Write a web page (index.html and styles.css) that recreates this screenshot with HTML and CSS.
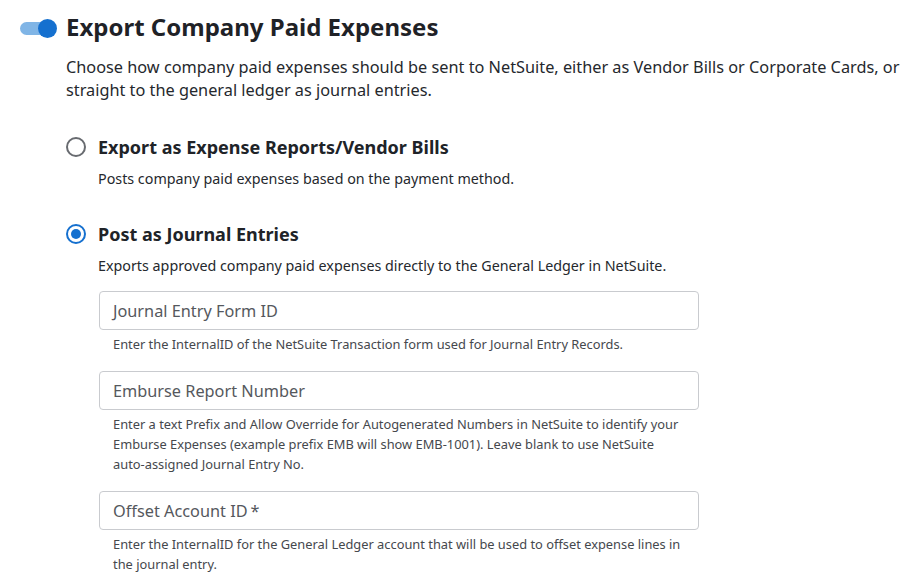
FILE: index.html
```html
<!DOCTYPE html>
<html>
<head>
<meta charset="utf-8">
<link rel="stylesheet" href="styles.css">
</head>
<body>
<div class="page">
  <div class="header">
    <span class="toggle"><span class="knob"></span></span>
    <h1 class="title">Export Company Paid Expenses</h1>
  </div>
  <p class="intro">Choose how company paid expenses should be sent to NetSuite, either as Vendor Bills or Corporate Cards, or straight to the general ledger as journal entries.</p>

  <div class="option">
    <div class="option-head">
      <span class="radio"></span>
      <span class="option-label">Export as Expense Reports/Vendor Bills</span>
    </div>
    <p class="option-desc">Posts company paid expenses based on the payment method.</p>
  </div>

  <div class="option">
    <div class="option-head">
      <span class="radio checked"></span>
      <span class="option-label">Post as Journal Entries</span>
    </div>
    <p class="option-desc">Exports approved company paid expenses directly to the General Ledger in NetSuite.</p>

    <div class="fields">
      <div class="field">
        <div class="input"><span class="placeholder">Journal Entry Form ID</span></div>
        <p class="help">Enter the InternalID of the NetSuite Transaction form used for Journal Entry Records.</p>
      </div>
      <div class="field">
        <div class="input"><span class="placeholder">Emburse Report Number</span></div>
        <p class="help">Enter a text Prefix and Allow Override for Autogenerated Numbers in NetSuite to identify your Emburse Expenses (example prefix EMB will show EMB-1001). Leave blank to use NetSuite <span class="nowrap">auto-assigned</span> Journal Entry No.</p>
      </div>
      <div class="field">
        <div class="input"><span class="placeholder">Offset Account ID<span class="req">*</span></span></div>
        <p class="help">Enter the InternalID for the General Ledger account that will be used to offset expense lines in the journal entry.</p>
      </div>
    </div>
  </div>
</div>
</body>
</html>
```

FILE: styles.css
```css
* { box-sizing: border-box; }
html, body { margin: 0; padding: 0; background: #fff; }
body { font-family: "Noto Sans", "Open Sans", sans-serif; color: #202328; }
.page { padding: 11px 0 0 20px; }
.header { display: flex; align-items: center; gap: 16px; }
.toggle { position: relative; width: 30px; height: 13px; border-radius: 7px; background: #80b5e6; flex: none; margin-top: 2px; }
.knob { position: absolute; right: -7px; top: -3px; width: 19px; height: 19px; border-radius: 50%; background: #1570cf; }
.title { margin: 0; font-size: 24px; font-weight: 700; line-height: 32px; color: #1f2227; }
.intro { margin: 13px 0 0 46px; width: 850px; font-size: 16.3px; line-height: 23px; color: #25282d; }
.option { margin: 33px 0 0 46px; }
.option-head { display: flex; align-items: center; gap: 12px; }
.radio { width: 20px; height: 20px; border-radius: 50%; border: 2px solid #686b70; flex: none; background: #fff; }
.radio.checked { border-color: #1570cf; position: relative; }
.radio.checked::after { content: ""; position: absolute; left: 3px; top: 3px; width: 10px; height: 10px; border-radius: 50%; background: #1570cf; }
.option-label { font-size: 18px; font-weight: 700; line-height: 24px; color: #202328; }
.option-desc { margin: 10px 0 0 32px; font-size: 14.3px; line-height: 20px; color: #25282d; }
.fields { margin: 15px 0 0 33px; display: flex; flex-direction: column; gap: 17px; }
.input { width: 600px; height: 39px; border: 1px solid #c9cbcf; border-radius: 4px; display: flex; align-items: center; padding: 0 13px; }
.placeholder { font-size: 16.3px; color: #55585d; }
.req { margin-left: 3px; }
.help { margin: 4px 0 0 14px; width: 576px; font-size: 12.85px; line-height: 20px; color: #45484d; }
.nowrap { white-space: nowrap; }
```
